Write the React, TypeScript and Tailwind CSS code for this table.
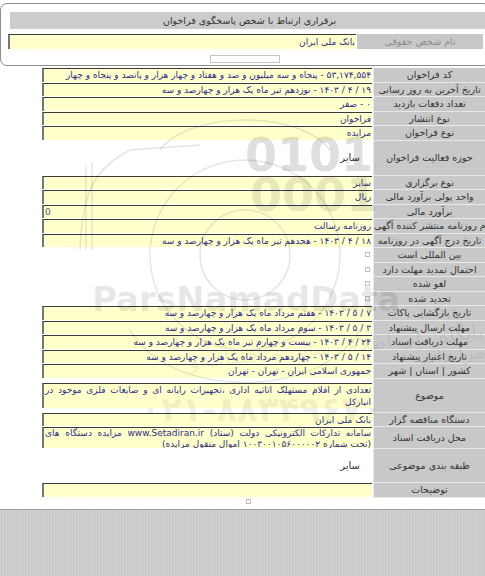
import type { ReactNode } from "react";

const inputCls =
  "h-full bg-[#ffffcc] border-t border-t-[#3a3a3a] border-l-2 border-l-[#777777] text-[#2e2e86] whitespace-nowrap overflow-hidden px-[1px]";

function Row({ label, children, h = "h-[14.5px]" }: { label: string; children?: ReactNode; h?: string }) {
  return (
    <div className={`flex ${h}`}>
      <div className="w-[42px] shrink-0" />
      <div className="w-[331px] shrink-0 pb-[1px] pr-[1px]">{children}</div>
      <div className="w-[112px] shrink-0 bg-[#c8c8c8] border-b border-b-[#e8e8e8] border-l border-l-[#e8e8e8] flex flex-col justify-center overflow-hidden">
        <div dir="ltr" className="text-center whitespace-nowrap text-[#333333] text-[9.5px] leading-[13px]">
          {label}
        </div>
      </div>
    </div>
  );
}

function Field({ children }: { children?: ReactNode }) {
  return (
    <div dir="rtl" className={`${inputCls} leading-[13px]`}>
      {children}
    </div>
  );
}

function Check() {
  return (
    <div className="h-full flex items-center justify-end pr-[2px]">
      <div className="w-[5px] h-[5px] border border-[#bdbdbd] bg-white" />
    </div>
  );
}

function Plain({ children }: { children: ReactNode }) {
  return (
    <div dir="rtl" className="h-full flex items-center pr-[12px] text-[#333333] text-[10px]">
      {children}
    </div>
  );
}

function Watermark() {
  return (
    <div className="absolute inset-0 pointer-events-none">
      <svg width="485" height="509" className="absolute left-0 top-0" fill="none" stroke="#000" strokeOpacity="0.1" strokeWidth="1.5">
        <circle cx="245" cy="255" r="95" />
        <circle cx="245" cy="255" r="45" />
        <path d="M80 250 C 82 200, 90 170, 130 150 L 200 145" />
        <path d="M86 250 V 165 M 92 250 V 162" />
        <path d="M160 150 C 190 110, 300 110, 330 150" />
        <path d="M130 330 C 170 400, 320 400, 360 330" />
      </svg>
      <div className="absolute left-[245px] top-[132px] text-[46px] font-bold text-black/15 leading-none">
        0101
      </div>
      <div className="absolute left-[250px] top-[172px] text-[46px] font-bold text-black/10 leading-none">
        0001
      </div>
      <div className="absolute left-[92px] top-[282px] text-[34px] font-bold text-black/10 leading-none">
        ParsNamadData
      </div>
      <div dir="rtl" className="absolute left-[120px] top-[340px] text-[20px] text-black/[0.07] leading-none -rotate-6">
        پایگاه ملی اطلاع رسانی مناقصات و مزایدات
      </div>
      <div className="absolute left-[140px] top-[392px] text-[34px] font-bold text-black/[0.07] leading-none">
        ۰۲۱-۸۸۳۴۹۶۷۰
      </div>
    </div>
  );
}

export default function App() {
  return (
    <div className="w-[485px] h-[576px] overflow-hidden bg-white flex flex-col font-['DejaVu_Sans',sans-serif] text-[9px]">
      <div className="relative h-[509px] shrink-0">
        <div className="pt-[3px]">
          <div className="w-[490px] h-[63px] border border-[#8c8c8c] rounded-[7px] pt-[8px]">
            <div dir="rtl" className="ml-[9px] h-[17px] bg-[#cccccc] text-center leading-[17px] text-[#333333] text-[9.5px]">
              برقراری ارتباط با شخص پاسخگوی فراخوان
            </div>
            <div className="mt-[5px] ml-[7px] flex h-[15px]">
              <div dir="rtl" className={`w-[348px] ${inputCls} leading-[14px]`}>
                بانک ملی ایران
              </div>
              <div className="ml-[1px] w-[126px] bg-[#c8c8c8] text-[#8a8a8a] text-center leading-[15px] text-[9.5px]">
                نام شخص حقوقی
              </div>
            </div>
            <div className="mt-[6px] mx-auto w-[70px] h-[8px] border border-[#c4c4c4] bg-white" />
          </div>
        </div>

        <div className="mt-[2px]">
          <Row label="کد فراخوان">
            <Field>۵۳,۱۷۴,۵۵۴ - پنجاه و سه میلیون و صد و هفتاد و چهار هزار و پانصد و پنجاه و چهار</Field>
          </Row>
          <Row label="تاریخ آخرین به روز رسانی">
            <Field>۱۹ / ۴ / ۱۴۰۳ - نوزدهم تیر ماه یک هزار و چهارصد و سه</Field>
          </Row>
          <Row label="تعداد دفعات بازدید">
            <Field>۰ - صفر</Field>
          </Row>
          <Row label="نوع انتشار">
            <Field>فراخوان</Field>
          </Row>
          <Row label="نوع فراخوان">
            <Field>مزایده</Field>
          </Row>
          <Row label="حوزه فعالیت فراخوان" h="h-[35px]">
            <Plain>سایر</Plain>
          </Row>
          <Row label="نوع برگزاری">
            <Field>سایر</Field>
          </Row>
          <Row label="واحد پولی برآورد مالی">
            <Field>ریال</Field>
          </Row>
          <Row label="برآورد مالی">
            <div dir="ltr" className={`${inputCls} leading-[13px] text-left text-[#555577]`}>0</div>
          </Row>
          <Row label="نام روزنامه منتشر کننده آگهی">
            <Field>روزنامه رسالت</Field>
          </Row>
          <Row label="تاریخ درج آگهی در روزنامه">
            <Field>۱۸ / ۴ / ۱۴۰۳ - هجدهم تیر ماه یک هزار و چهارصد و سه</Field>
          </Row>
          <Row label="بین المللی است">
            <Check />
          </Row>
          <Row label="احتمال تمدید مهلت دارد">
            <Check />
          </Row>
          <Row label="لغو شده">
            <Check />
          </Row>
          <Row label="تجدید شده">
            <Check />
          </Row>
          <Row label="تاریخ بازگشایی پاکات">
            <Field>۷ / ۵ / ۱۴۰۳ - هفتم مرداد ماه یک هزار و چهارصد و سه</Field>
          </Row>
          <Row label="مهلت ارسال پیشنهاد">
            <Field>۳ / ۵ / ۱۴۰۳ - سوم مرداد ماه یک هزار و چهارصد و سه</Field>
          </Row>
          <Row label="مهلت دریافت اسناد">
            <Field>۲۴ / ۴ / ۱۴۰۳ - بیست و چهارم تیر ماه یک هزار و چهارصد و سه</Field>
          </Row>
          <Row label="تاریخ اعتبار پیشنهاد">
            <Field>۱۴ / ۵ / ۱۴۰۳ - چهاردهم مرداد ماه یک هزار و چهارصد و سه</Field>
          </Row>
          <Row label="کشور | استان | شهر">
            <Field>جمهوری اسلامی ایران - تهران - تهران</Field>
          </Row>
          <Row label="موضوع" h="h-[34px]">
            <div className="h-full flex items-center">
              <div dir="rtl" className="w-full h-[25px] bg-[#ffffcc] border-t border-t-[#3a3a3a] border-l-2 border-l-[#777777] text-[#2e2e86] leading-[12px] text-justify overflow-hidden px-[1px]">
                تعدادی از اقلام مستهلک اثاثیه اداری ،تجهیزات رایانه ای و ضایعات فلزی موجود در انبارکل
              </div>
            </div>
          </Row>
          <Row label="دستگاه مناقصه گزار">
            <Field>بانک ملی ایران</Field>
          </Row>
          <Row label="محل دریافت اسناد" h="h-[22px]">
            <div dir="rtl" className="h-full bg-[#ffffcc] border-t border-t-[#3a3a3a] border-l-2 border-l-[#777777] text-[#2e2e86] leading-[10.5px] text-justify overflow-hidden px-[1px]">
              سامانه تدارکات الکترونیکی دولت (ستاد) www.Setadiran.ir مزایده دستگاه های (تحت شماره ۱۰۰۳۰۰۱۰۵۶۰۰۰۰۰۲ اموال منقول مزایده)
            </div>
          </Row>
          <Row label="طبقه بندی موضوعی" h="h-[34px]">
            <Plain>سایر</Plain>
          </Row>
          <Row label="توضیحات">
            <Field />
          </Row>
          <div className="mt-[1px] ml-[246px] w-[5px] h-[5px] border border-[#bdbdbd] bg-white" />
        </div>

        <Watermark />
      </div>

      <div className="flex-1 border-t border-[#9c9c9c] bg-[#cdcdcd]">
        <div className="h-full bg-[image:repeating-linear-gradient(90deg,rgba(255,255,255,0.18)_0px,rgba(0,0,0,0.04)_2px,rgba(255,255,255,0.1)_3px)]" />
      </div>
    </div>
  );
}
